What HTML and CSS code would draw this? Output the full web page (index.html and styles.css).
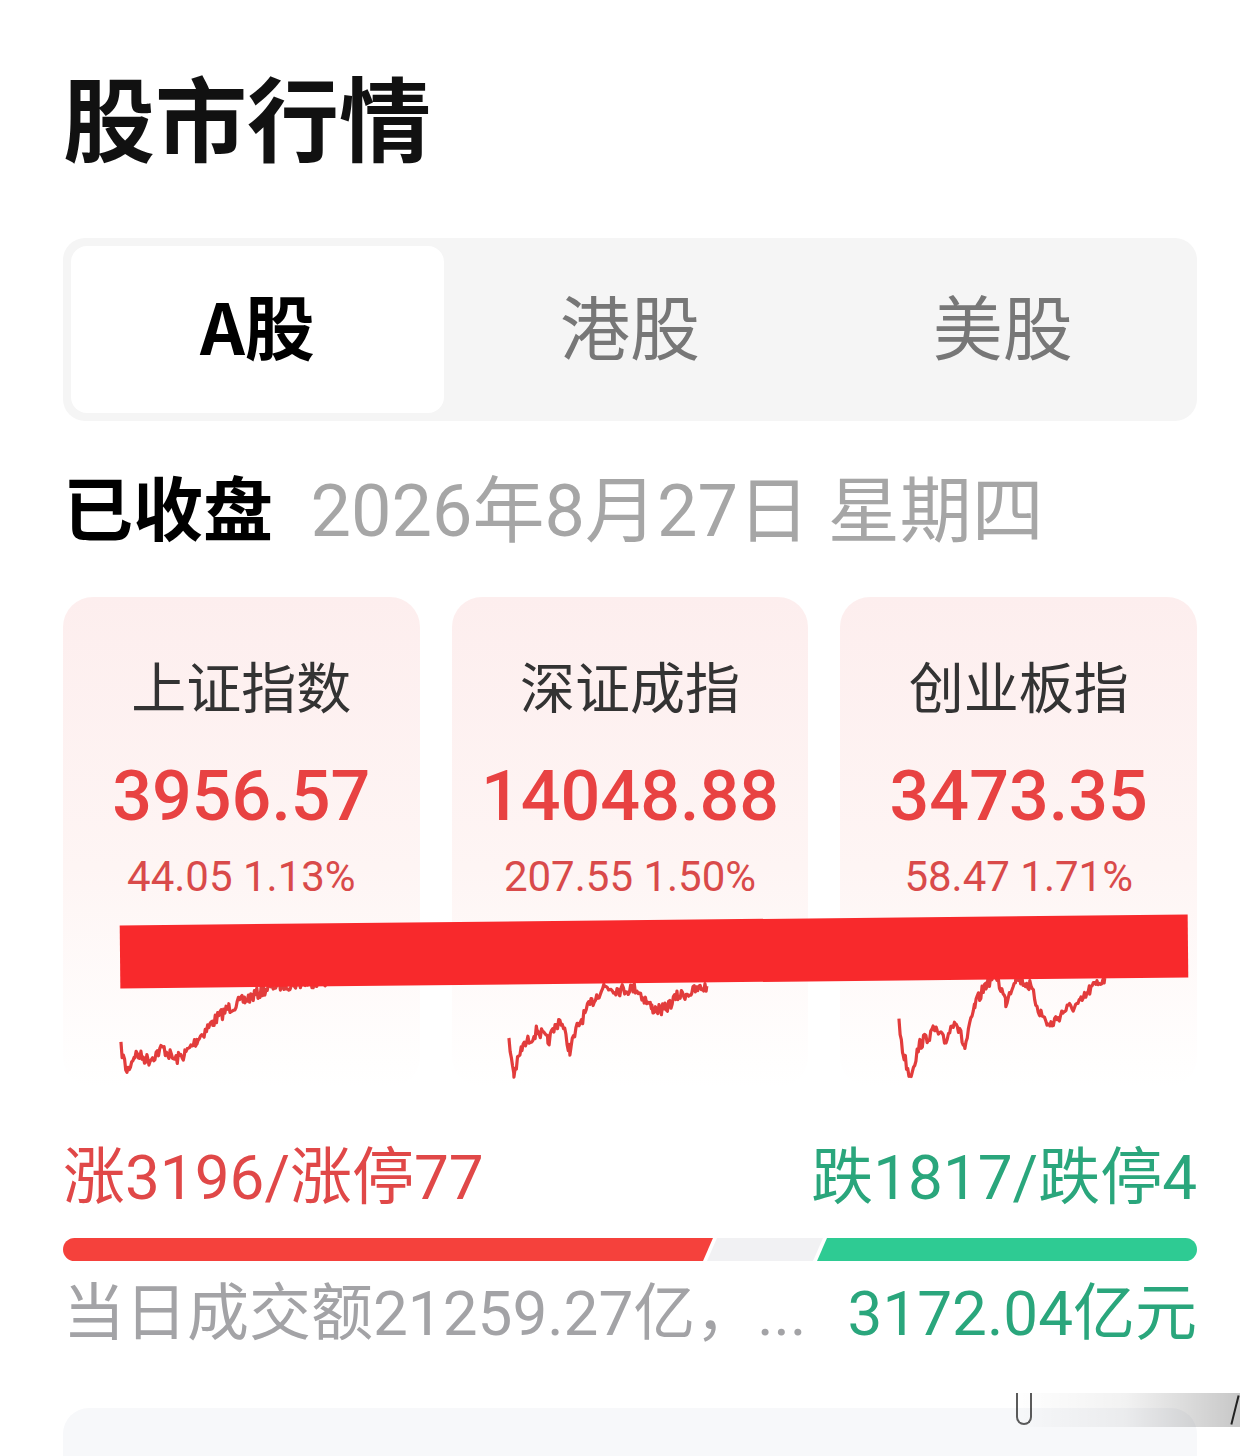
FILE: index.html
```html
<!DOCTYPE html>
<html lang="zh-CN">
<head>
<meta charset="UTF-8">
<title>股市行情</title>
<link rel="stylesheet" href="styles.css">
</head>
<body>
<div class="page">
<h1 class="title">股市行情</h1>

<div class="tabs">
<div class="tab active">A股</div>
<div class="tab">港股</div>
<div class="tab">美股</div>
</div>

<div class="status">
<span class="closed">已收盘</span>
<span class="date">2026年8月27日 星期四</span>
</div>

<div class="cards">
<div class="card">
<div class="card-name">上证指数</div>
<div class="card-value">3956.57</div>
<div class="card-change">44.05 1.13%</div>
<svg class="chart" viewBox="0 0 357 130"><polyline id="line1"/></svg>
</div>
<div class="card">
<div class="card-name">深证成指</div>
<div class="card-value">14048.88</div>
<div class="card-change">207.55 1.50%</div>
<svg class="chart" viewBox="0 0 357 130"><polyline id="line2"/></svg>
</div>
<div class="card">
<div class="card-name">创业板指</div>
<div class="card-value">3473.35</div>
<div class="card-change">58.47 1.71%</div>
<svg class="chart" viewBox="0 0 357 130"><polyline id="line3"/></svg>
</div>
<div class="redact"></div>
</div>

<div class="breadth">
<span class="up">涨3196/涨停77</span>
<span class="down">跌1817/跌停4</span>
</div>

<div class="bar">
<div class="seg seg-up"></div>
<div class="seg seg-flat"></div>
<div class="seg seg-down"></div>
</div>

<div class="volume">
<span class="vol-text">当日成交额21259.27亿，...</span>
<span class="vol-diff">3172.04亿元</span>
</div>

<div class="panel"></div>
<div class="watermark"><span class="wm-cup"></span><span class="wm-slash"></span></div>
</div>

<script>
// intraday lines: key points (x, y in chart box) plus a little seeded noise
var seed = 7;
function rnd(){ seed = (seed * 16807) % 2147483647; return seed / 2147483647; }

function drawLine(id, keys){
 var pts = [];
 for(var i = 0; i < keys.length - 1; i++){
  var a = keys[i], b = keys[i+1];
  for(var x = a[0]; x < b[0]; x += 1.2){
   var t = (x - a[0]) / (b[0] - a[0]);
   var y = a[1] + (b[1] - a[1]) * t + (rnd() - 0.5) * 12;
   pts.push(x.toFixed(1) + ',' + y.toFixed(1));
  }
 }
 var last = keys[keys.length-1];
 pts.push(last[0] + ',' + last[1]);
 document.getElementById(id).setAttribute('points', pts.join(' '));
}

drawLine('line1', [[58,88],[64,112],[72,94],[86,100],[100,88],[112,100],[122,94],[134,80],[150,62],[166,48],[182,40],[196,33],[208,26],[228,24],[248,22],[267,20]]);
drawLine('line2', [[57,82],[62,114],[70,88],[86,70],[96,82],[108,58],[118,90],[126,66],[140,42],[152,26],[168,30],[184,28],[200,48],[212,50],[226,36],[240,32],[255,26]]);
drawLine('line3', [[59,64],[63,92],[70,116],[80,84],[95,70],[105,82],[115,58],[125,88],[135,46],[146,24],[156,14],[166,42],[176,16],[190,26],[200,52],[210,66],[225,50],[240,44],[250,30],[265,18]]);
</script>
</body>
</html>
```

FILE: styles.css
```css
body { margin:0; background:#fff; font-family:"Noto Sans CJK SC", sans-serif; color:#111; }
.page { position:relative; height:1456px; overflow:hidden; padding:0 63px; }

.title { margin:0; padding-top:65px; font-size:92px; line-height:100px; font-weight:700; color:#111; }

.tabs { display:flex; margin-top:73px; height:183px; box-sizing:border-box; padding:8px; background:#f5f5f5; border-radius:22px; }
.tab { flex:1; display:flex; align-items:center; justify-content:center; padding-bottom:10px; font-size:70px; color:#777; border-radius:16px; }
.tab.active { background:#fff; color:#000; font-weight:700; }

.status { margin-top:40px; line-height:90px; white-space:nowrap; }
.closed { font-size:70px; font-weight:700; color:#000; }
.date { margin-left:34px; font-family:Roboto, "Noto Sans CJK SC", sans-serif; font-size:72px; color:#a6a6a6; }

.cards { position:relative; display:grid; grid-template-columns:repeat(3, 1fr); gap:32px; margin-top:23px; }
.card { height:490px; box-sizing:border-box; padding-top:52px; border-radius:30px; text-align:center; background:linear-gradient(180deg, #fdeeee 0%, #fef5f4 55%, #fff 100%); }
.card-name { font-size:55px; line-height:70px; color:#333; }
.card-value { margin-top:37px; font-family:Roboto, sans-serif; font-weight:500; font-size:70px; line-height:80px; color:#e84242; }
.card-change { margin-top:16px; font-family:Roboto, sans-serif; font-size:42px; line-height:50px; color:#d94a4a; }
.chart { display:block; width:100%; height:130px; margin-top:58px; }
.chart polyline { fill:none; stroke:#e23c3c; stroke-width:3.2; stroke-linejoin:round; }

/* painted-over block across the charts */
.redact { position:absolute; left:57px; top:323px; width:1068px; height:63px; background:#f8292c; transform:rotate(-0.59deg); }

.breadth { display:flex; justify-content:space-between; margin-top:56px; font-family:Roboto, "Noto Sans CJK SC", sans-serif; font-size:62px; line-height:70px; }
.up { color:#e04848; }
.down { color:#2aa67c; }

.bar { display:flex; height:23px; margin-top:25px; }
.seg { height:100%; }
.seg-up { width:650px; background:#f5413c; border-radius:12px 0 0 12px; clip-path:polygon(0 0, 100% 0, calc(100% - 10px) 100%, 0 100%); }
.seg-flat { width:116px; margin-left:-6px; background:#f1f1f3; clip-path:polygon(10px 0, 100% 0, calc(100% - 10px) 100%, 0 100%); }
.seg-down { flex:1; margin-left:-6px; background:#2ecb93; border-radius:0 12px 12px 0; clip-path:polygon(10px 0, 100% 0, 100% 100%, 0 100%); }

.volume { display:flex; justify-content:space-between; margin-top:13px; font-family:Roboto, "Noto Sans CJK SC", sans-serif; font-size:62px; line-height:80px; white-space:nowrap; }
.vol-text { color:#a3a3a6; }
.vol-diff { color:#2aa67c; }

.panel { margin-top:54px; height:120px; background:#f7f8fa; border-radius:26px; }

.watermark { position:absolute; left:1010px; top:1393px; width:230px; height:34px; background:linear-gradient(90deg, rgba(0,0,0,0) 0%, rgba(0,0,0,0.05) 50%, rgba(0,0,0,0.22) 100%); }
.wm-cup { position:absolute; left:6px; top:0; width:16px; height:32px; border:2px solid #333; border-top:none; border-radius:0 0 9px 9px; box-sizing:border-box; opacity:0.8; }
.wm-slash { position:absolute; right:4px; top:2px; width:2px; height:30px; background:#222; transform:rotate(14deg); }
```
